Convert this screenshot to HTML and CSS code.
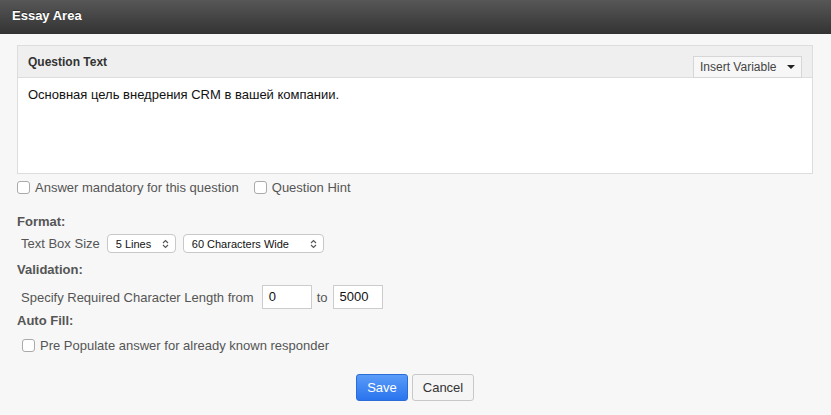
FILE: index.html
```html
<!DOCTYPE html>
<html lang="en">
<head>
    <meta charset="UTF-8">
    <title>Essay Area</title>
    <link rel="stylesheet" href="styles.css">
</head>
<body>

    <div class="titlebar">Essay Area</div>

    <div class="content">
        <div class="question-panel">
            <div class="panel-head">
                <strong>Question Text</strong>
                <div class="insert-var">
                    <span>Insert Variable</span>
                    <span class="caret"></span>
                </div>
            </div>
            <div class="panel-body">Основная цель внедрения CRM в вашей компании.</div>
        </div>

        <div class="check-row">
            <label><span class="box"></span>Answer mandatory for this question</label>
            <label><span class="box"></span>Question Hint</label>
        </div>

        <div class="section-title format-title">Format:</div>
        <div class="field-row">
            <span>Text Box Size</span>
            <div class="select sel-lines">
                <span>5 Lines</span>
                <svg class="arrows" width="7" height="10" viewBox="0 0 7 10"><path d="M1 4 L3.5 1.5 L6 4 M1 6 L3.5 8.5 L6 6" fill="none" stroke="#555" stroke-width="1.1"/></svg>
            </div>
            <div class="select sel-wide">
                <span>60 Characters Wide</span>
                <svg class="arrows" width="7" height="10" viewBox="0 0 7 10"><path d="M1 4 L3.5 1.5 L6 4 M1 6 L3.5 8.5 L6 6" fill="none" stroke="#555" stroke-width="1.1"/></svg>
            </div>
        </div>

        <div class="section-title">Validation:</div>
        <div class="field-row length-row">
            <span>Specify Required Character Length from</span>
            <div class="text-input">0</div>
            <span>to</span>
            <div class="text-input">5000</div>
        </div>

        <div class="section-title autofill-title">Auto Fill:</div>
        <div class="check-row prepopulate">
            <label><span class="box"></span>Pre Populate answer for already known responder</label>
        </div>

        <div class="buttons">
            <button class="btn btn-save">Save</button>
            <button class="btn btn-cancel">Cancel</button>
        </div>
    </div>

</body>
</html>
```

FILE: styles.css
```css
body {
    margin: 0;
    background-color: #f7f7f7;
    font-family: 'Liberation Sans', Arial, sans-serif;
    font-size: 13px;
    color: #333;
}

.titlebar {
    height: 34px;
    line-height: 32px;
    padding-left: 12px;
    color: #fff;
    font-size: 13px;
    font-weight: bold;
    background: linear-gradient(#575757, #333);
    text-shadow: 0 -1px 0 rgba(0, 0, 0, 0.4);
}

.content {
    padding: 11px 18px 0 17px;
}

.question-panel {
    border: 1px solid #ddd;
    background-color: #fff;
}

.panel-head {
    display: flex;
    justify-content: space-between;
    align-items: flex-end;
    height: 31px;
    padding-left: 10px;
    padding-right: 10px;
    background-color: #efefef;
    border-bottom: 1px solid #ddd;
}

.panel-head strong {
    align-self: center;
    font-size: 12px;
    color: #333;
}

.insert-var {
    display: flex;
    align-items: center;
    justify-content: space-between;
    width: 96px;
    height: 20px;
    padding: 0 5px 0 6px;
    margin-bottom: -1px;
    border: 1px solid #d6d6d6;
    background-color: #f7f7f7;
    font-size: 12px;
    color: #444;
}

.caret {
    width: 0;
    height: 0;
    margin-right: 1px;
    border-left: 4px solid transparent;
    border-right: 4px solid transparent;
    border-top: 4px solid #222;
}

.panel-body {
    height: 86px;
    padding: 9px 10px 0 10px;
    font-size: 13px;
    color: #111;
}

.check-row {
    display: flex;
    gap: 15px;
    margin-top: 6px;
    color: #555;
}

.check-row label {
    display: flex;
    align-items: center;
}

.box {
    width: 11px;
    height: 11px;
    margin-right: 5px;
    border: 1px solid #aaa;
    border-radius: 3px;
    background-color: #fff;
}

.section-title {
    margin-top: 9px;
    font-weight: bold;
    color: #555;
}

.format-title {
    margin-top: 19px;
}

.autofill-title {
    margin-top: 4px;
}

.field-row {
    display: flex;
    align-items: center;
    gap: 7px;
    margin-top: 5px;
    padding-left: 4px;
    color: #555;
}

.select {
    display: flex;
    justify-content: space-between;
    align-items: center;
    box-sizing: border-box;
    height: 19px;
    padding: 0 6px 0 8px;
    border: 1px solid #c8c8c8;
    border-radius: 4px;
    background-color: #fff;
    font-size: 11px;
    color: #111;
}

.sel-lines {
    width: 69px;
}

.sel-wide {
    width: 141px;
}

.length-row {
    margin-top: 8px;
    gap: 5px;
}

.length-row span:first-child {
    margin-right: 3px;
}

.text-input {
    box-sizing: border-box;
    width: 50px;
    height: 24px;
    line-height: 22px;
    padding-left: 6px;
    border: 1px solid #ccc;
    background-color: #fff;
    color: #111;
    font-size: 13px;
}

.prepopulate {
    margin-top: 10px;
    padding-left: 5px;
}

.buttons {
    display: flex;
    justify-content: center;
    gap: 4px;
    margin-top: 21px;
}

.btn {
    height: 27px;
    font-family: 'Liberation Sans', Arial, sans-serif;
    font-size: 13px;
    border-radius: 3px;
}

.btn-save {
    width: 52px;
    color: #fff;
    border: 1px solid #2c6cd6;
    background: linear-gradient(#5a9cf8, #2a74ee);
}

.btn-cancel {
    width: 62px;
    color: #333;
    border: 1px solid #c8c8c8;
    background-color: #f5f5f5;
}
```
